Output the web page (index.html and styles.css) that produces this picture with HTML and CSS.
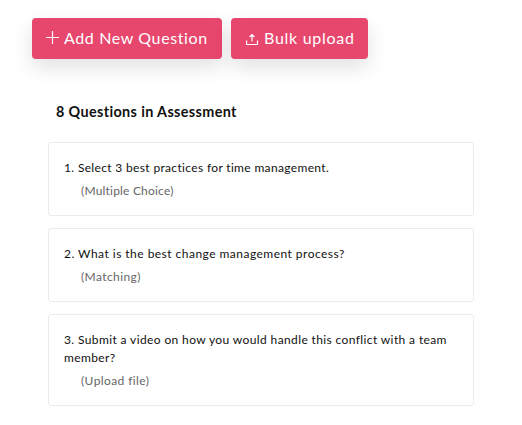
FILE: index.html
```html
<!DOCTYPE html>
<html lang="en">
<head>
<meta charset="utf-8">
<title>Assessment questions</title>
<link rel="stylesheet" href="styles.css">
</head>
<body>
<div class="actions">
  <button class="btn btn-add"><svg class="icon-plus" viewBox="0 0 14 14"><path d="M6.500 0v13M0 6.500h13"/></svg><span class="add-label">Add New Question</span></button>
  <button class="btn btn-bulk"><svg class="icon-upload" viewBox="0 0 14 14"><path d="M.6 8.500v4h10.900v-4M6 9.500V2.500M3.500 5l2.500-2.500L8.500 5"/></svg><span class="bulk-label">Bulk upload</span></button>
</div>
<main class="assessment">
  <h1><span class="t0">8 Questions in Assessment</span></h1>
  <section class="card"><p class="question"><span class="t1">1. Select 3 best practices for time management.</span></p><p class="kind"><span class="k1">(Multiple Choice)</span></p></section>
  <section class="card"><p class="question"><span class="t2">2. What is the best change management process?</span></p><p class="kind"><span class="k2">(Matching)</span></p></section>
  <section class="card"><p class="question"><span class="t3">3. Submit a video on how you would handle this conflict with a team</span><br><span class="t4">member?</span></p><p class="kind"><span class="k3">(Upload file)</span></p></section>
</main>
</body>
</html>
```
FILE: styles.css
```css
* { box-sizing: border-box; }
body { margin: 0; padding: 18px 48px 0 32px; background: #fff; color: #111; font-family: Lato, sans-serif; font-variant-ligatures: none; }
.actions { display: flex; gap: 9px; }
.btn { display: flex; align-items: center; height: 41px; padding: 0 14px 1px; border: 0; border-radius: 4px; background: #e7466d; color: #fff; font: 400 16px/24px Lato, sans-serif; letter-spacing: .62px; white-space: nowrap; box-shadow: 0 8px 20px rgba(0,0,0,.12); }
.btn-add { width: 190px; }
.btn-bulk { width: 137px; }
.btn svg { width: 14px; height: 14px; fill: none; stroke: #fff; stroke-width: 1.2; flex: none; margin: 0 4px 0 0; }
.btn .icon-upload { margin: 1px 4px 0 1px; }
.bulk-label { letter-spacing: .72px; }
.assessment { margin: 43px 0 0 16px; }
h1 { margin: 0 0 20px 8px; font-size: 14.4px; line-height: 20px; font-weight: 700; letter-spacing: .37px; }
.card { margin-bottom: 12px; padding: 16px 15px 15px; border: 1px solid #ebebeb; border-radius: 3px; }
.question, .kind { margin: 0; font-size: 12px; line-height: 18px; white-space: nowrap; }
.question { letter-spacing: .38px; }
.t1 { letter-spacing: .34px; }
.kind { margin: 5px 0 0 17px; color: #666; letter-spacing: .4px; }
.t2 { letter-spacing: .47px; }
.k1 { letter-spacing: .2px; }
```
